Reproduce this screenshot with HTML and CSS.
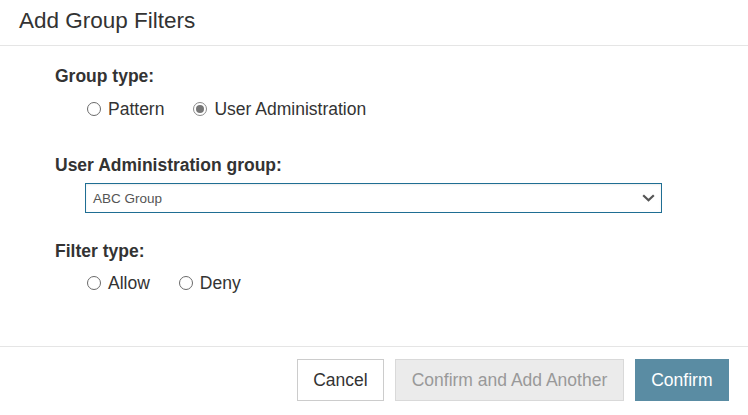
FILE: index.html
```html
<!DOCTYPE html>
<html lang="en">
<head>
<meta charset="utf-8">
<title>Add Group Filters</title>
<link rel="stylesheet" href="styles.css">
</head>
<body>
<div class="modal">
  <div class="modal-header">
    <h1 class="modal-title">Add Group Filters</h1>
  </div>
  <div class="modal-body">
    <div class="field">
      <div class="field-label">Group type:</div>
      <div class="radio-row">
        <label class="radio"><span class="radio-circle"></span><span class="radio-text">Pattern</span></label>
        <label class="radio"><span class="radio-circle checked"></span><span class="radio-text">User Administration</span></label>
      </div>
    </div>
    <div class="field field-select">
      <div class="field-label">User Administration group:</div>
      <div class="select">
        <span class="select-value">ABC Group</span>
        <svg class="select-chevron" width="13" height="8" viewBox="0 0 13 8"><path d="M1.2 1.2 L6.5 6.3 L11.8 1.2" fill="none" stroke="#555" stroke-width="2.2"/></svg>
      </div>
    </div>
    <div class="field field-filter">
      <div class="field-label">Filter type:</div>
      <div class="radio-row radio-row-tight">
        <label class="radio"><span class="radio-circle"></span><span class="radio-text">Allow</span></label>
        <label class="radio"><span class="radio-circle"></span><span class="radio-text">Deny</span></label>
      </div>
    </div>
  </div>
  <div class="modal-footer">
    <button class="btn btn-default">Cancel</button>
    <button class="btn btn-disabled">Confirm and Add Another</button>
    <button class="btn btn-primary">Confirm</button>
  </div>
</div>
</body>
</html>
```
FILE: styles.css
```css
html, body {
  margin: 0;
  padding: 0;
  background: #fff;
}
body {
  font-family: "Liberation Sans", Arial, sans-serif;
  color: #333;
}
.modal {
  width: 748px;
  height: 415px;
  display: flex;
  flex-direction: column;
  background: #fff;
}
.modal-header {
  height: 46px;
  box-sizing: border-box;
  padding: 9px 19px 0;
  border-bottom: 1px solid #e5e5e5;
}
.modal-title {
  margin: 0;
  font-size: 22.5px;
  font-weight: normal;
  line-height: 24px;
  color: #333;
}
.modal-body {
  height: 300px;
  box-sizing: border-box;
  padding: 20px 0 0 55px;
}
.field-label {
  font-size: 17.5px;
  font-weight: bold;
  line-height: 20px;
  color: #333;
}
.radio-row {
  display: flex;
  gap: 29px;
  margin-top: 13px;
  padding-left: 32px;
}
.radio-row-tight {
  margin-top: 12px;
}
.radio {
  display: flex;
  align-items: center;
  gap: 7px;
  font-size: 17.5px;
  line-height: 20px;
  color: #333;
}
.radio-circle {
  width: 14px;
  height: 14px;
  box-sizing: border-box;
  border: 1px solid #6a6a6a;
  border-radius: 50%;
  display: flex;
  align-items: center;
  justify-content: center;
}
.radio-circle.checked {
  border-color: #8a8a8a;
}
.radio-circle.checked::after {
  content: "";
  width: 8px;
  height: 8px;
  border-radius: 50%;
  background: #767676;
}
.field-select {
  margin-top: 36px;
}
.select {
  margin-top: 8px;
  margin-left: 30px;
  width: 577px;
  height: 30px;
  box-sizing: border-box;
  border: 1px solid #1f6e93;
  box-shadow: inset 0 1px 2px rgba(0, 0, 0, 0.08);
  display: flex;
  align-items: center;
  justify-content: space-between;
  padding: 0 6px 0 7px;
}
.select-value {
  font-size: 13.5px;
  color: #555;
}
.select-chevron {
  display: block;
}
.field-filter {
  margin-top: 28px;
}
.modal-footer {
  flex: 1;
  border-top: 1px solid #e5e5e5;
  display: flex;
  justify-content: flex-end;
  align-items: flex-start;
  gap: 11px;
  padding: 12px 19px 0 0;
}
.btn {
  height: 42px;
  box-sizing: border-box;
  padding: 0 15.5px;
  font-family: "Liberation Sans", Arial, sans-serif;
  font-size: 17.5px;
  border: 1px solid #ccc;
  background: #fff;
  color: #333;
  border-radius: 0;
  cursor: pointer;
}
.btn-disabled {
  background: #ebebeb;
  border-color: #d9d9d9;
  color: #999;
}
.btn-primary {
  background: #5a8ca3;
  border-color: #5a8ca3;
  color: #fff;
}
```
